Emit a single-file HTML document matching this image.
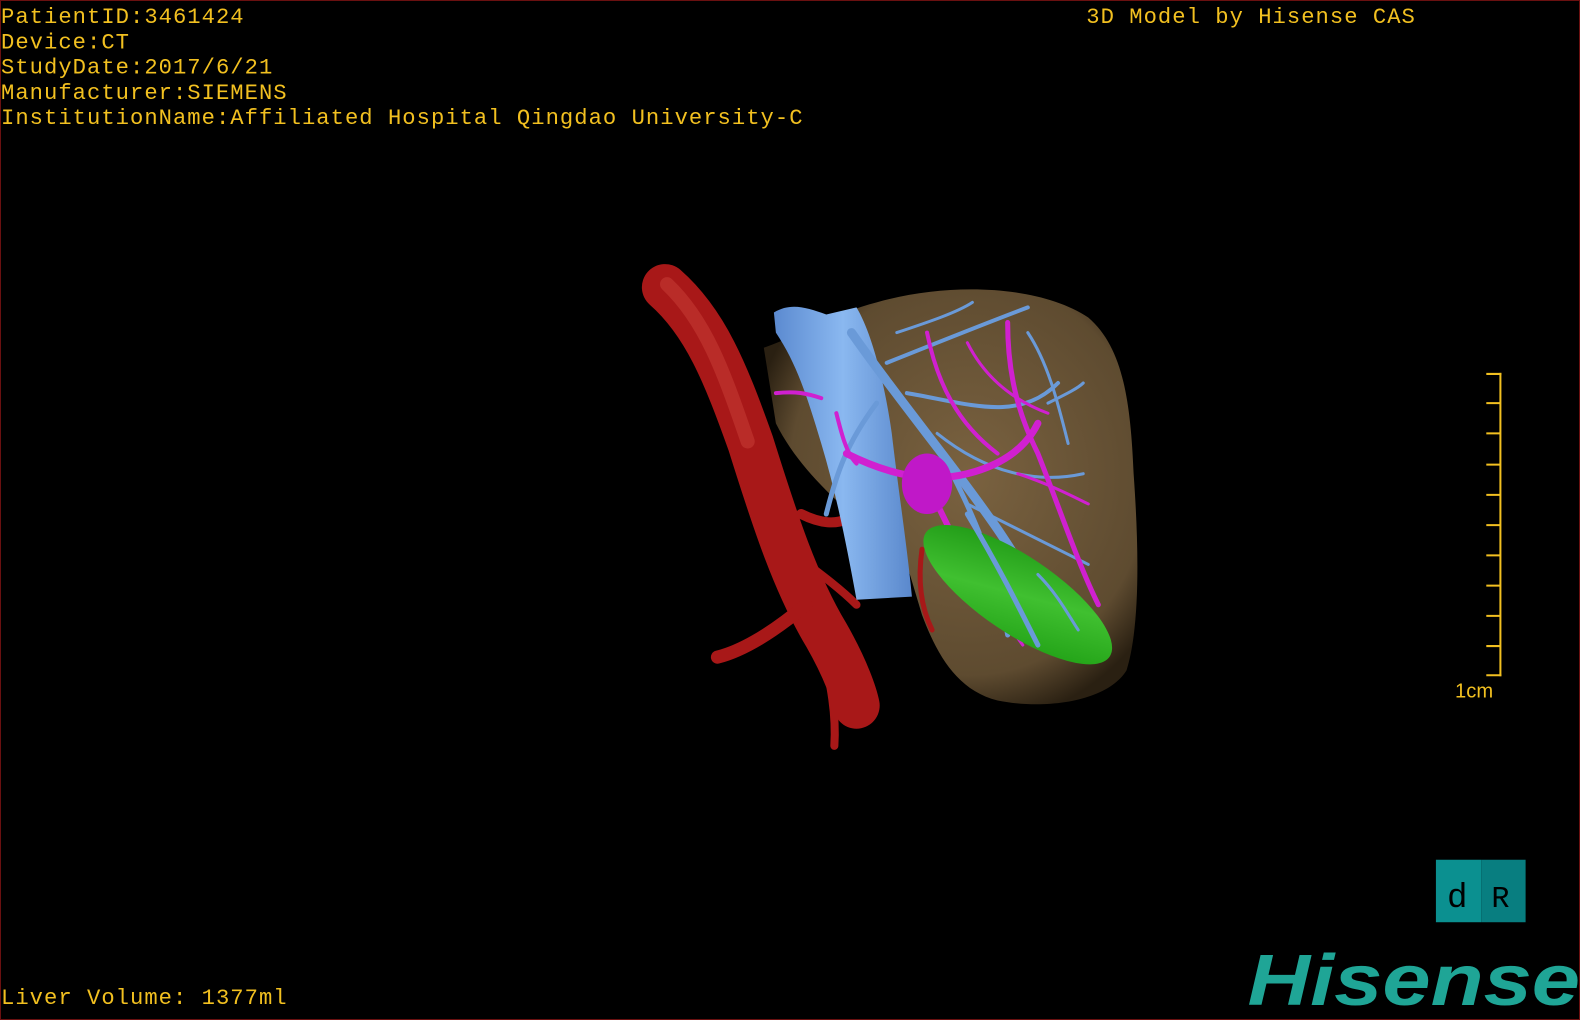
<!DOCTYPE html>
<html><head><meta charset="utf-8"><style>
html,body{margin:0;padding:0;background:#000;width:1580px;height:1020px;overflow:hidden}
#w{position:absolute;left:0;top:0;width:1568px;height:1012px;transform:scale(1.00766,1.0079);transform-origin:0 0}
.frame{position:absolute;left:0;top:0;width:1580px;height:1020px;border:1px solid #6a1010;box-sizing:border-box}
.t{position:absolute;font-family:"Liberation Mono",monospace;font-size:22px;letter-spacing:1.02px;color:#f2c020;white-space:pre;line-height:25px}
</style></head><body>
<div class="frame"></div>
<div id="w">
<div class="t" style="left:1px;top:5px">PatientID:3461424
Device:CT
StudyDate:2017/6/21
Manufacturer:SIEMENS
InstitutionName:Affiliated Hospital Qingdao University-C</div>
<div class="t" style="left:1078px;top:5px">3D Model by Hisense CAS</div>
<div class="t" style="left:1px;top:978px">Liver Volume: 1377ml</div>
<svg width="1568" height="1012" style="position:absolute;left:0;top:0">
<defs>
<radialGradient id="lv" cx="0.55" cy="0.45" r="0.6"><stop offset="0" stop-color="#7a6240"/><stop offset="0.8" stop-color="#5e4b30"/><stop offset="1" stop-color="#2a2012"/></radialGradient>
<linearGradient id="ivc" x1="0" x2="1"><stop offset="0" stop-color="#5b8ad0"/><stop offset="0.5" stop-color="#8ab8f0"/><stop offset="1" stop-color="#5a88cc"/></linearGradient>
<linearGradient id="gb" x1="0" y1="0" x2="1" y2="1"><stop offset="0" stop-color="#189010"/><stop offset="0.5" stop-color="#40c030"/><stop offset="1" stop-color="#1a9a10"/></linearGradient>
</defs>
<path d="M758 345 C800 330 830 310 870 300 C940 280 1030 282 1080 315 C1115 345 1122 400 1125 470 C1130 540 1132 620 1118 665 C1100 695 1040 705 990 695 C950 685 930 650 915 610 L900 560 C860 520 800 480 770 420 Z" fill="url(#lv)"/>
<g stroke-linecap="round" fill="none">
<path d="M660 285 C700 320 720 370 745 440 C770 520 790 580 820 630 C840 665 848 690 850 700" stroke="#a81818" stroke-width="46"/>
<path d="M662 282 C700 318 718 368 742 438" stroke="#c43a34" stroke-width="14" opacity="0.6"/>
<path d="M800 600 C770 625 740 645 712 652" stroke="#a81818" stroke-width="13"/>
<path d="M815 640 C825 680 830 710 828 740" stroke="#a81818" stroke-width="8"/>
<path d="M795 510 C815 520 830 520 840 515" stroke="#a81818" stroke-width="10"/>
<path d="M795 555 C815 570 835 585 850 600" stroke="#a81818" stroke-width="8"/>
<path d="M915 545 C910 580 915 605 925 625" stroke="#a81818" stroke-width="5"/>
</g>
<path d="M768 310 C785 300 800 305 820 312 L850 305 C865 330 878 380 885 430 C892 490 900 540 905 592 L850 595 C840 540 830 490 815 440 C800 390 790 360 770 330 Z" fill="url(#ivc)"/>
<g stroke="#6a9ad8" stroke-linecap="round" fill="none">
<path d="M845 330 C880 380 920 430 950 470 C980 510 1010 550 1040 610" stroke-width="9"/>
<path d="M940 460 C960 500 990 560 1000 630" stroke-width="5"/>
<path d="M880 360 C930 340 980 320 1020 305" stroke-width="4"/>
<path d="M900 390 C960 400 1010 420 1050 380" stroke-width="4"/>
<path d="M870 400 C840 440 830 470 820 510" stroke-width="5"/>
<path d="M930 430 C980 470 1030 480 1075 470" stroke-width="3"/>
<path d="M960 500 C1000 520 1040 540 1080 560" stroke-width="3"/>
<path d="M1020 330 C1040 360 1050 400 1060 440" stroke-width="3"/>
<path d="M1000 550 C1020 580 1040 610 1050 620" stroke-width="3"/>
<path d="M890 330 C920 320 950 310 965 300" stroke-width="3"/>
<path d="M1040 400 C1060 390 1070 385 1075 380" stroke-width="3"/>
</g>
<g stroke="#d020d0" stroke-linecap="round" fill="none">
<path d="M840 450 C880 470 920 480 960 470 C1000 460 1020 440 1030 420" stroke-width="7"/>
<path d="M920 480 C940 520 960 560 970 590" stroke-width="6"/>
<path d="M1000 320 C1000 370 1010 410 1030 450 C1050 500 1070 560 1090 600" stroke-width="5"/>
<path d="M920 330 C930 380 950 420 990 450" stroke-width="4"/>
<path d="M960 340 C975 370 1000 395 1040 410" stroke-width="3"/>
<path d="M830 410 C835 430 840 450 850 460" stroke-width="4"/>
<path d="M1010 470 C1040 480 1060 490 1080 500" stroke-width="3"/>
<path d="M970 560 C990 600 1000 620 1015 640" stroke-width="3"/>
<path d="M770 390 C790 388 800 390 815 395" stroke-width="4"/>
</g>
<ellipse cx="920" cy="480" rx="25" ry="30" fill="#c018c8"/>
<ellipse cx="1010" cy="590" rx="110" ry="38" transform="rotate(34 1010 590)" fill="url(#gb)"/>
<g stroke="#6a9ad8" stroke-linecap="round" fill="none">
<path d="M960 510 C990 560 1010 600 1030 640" stroke-width="5"/>
<path d="M1030 570 C1050 590 1060 610 1070 625" stroke-width="3"/>
</g>
<g stroke="#f2c020" stroke-width="2" fill="none">
<path d="M1489 370 V671"/>
<path d="M1475 371 H1490 M1475 400 H1489 M1475 430 H1489 M1475 461 H1489 M1475 491 H1489 M1475 521 H1489 M1475 551 H1489 M1475 581 H1489 M1475 611 H1489 M1475 641 H1489 M1475 670 H1490"/>
</g>
<text x="1444" y="692" font-family="Liberation Sans,sans-serif" font-size="20" fill="#f2c020">1cm</text>
<rect x="1425" y="853" width="45" height="62" fill="#0b9090"/>
<rect x="1470" y="853" width="44" height="62" fill="#087e80"/>
<text x="1436" y="900" font-family="Liberation Mono,monospace" font-size="34" fill="#000">d</text>
<text x="1480" y="900" font-family="Liberation Mono,monospace" font-size="30" fill="#000">R</text>
<text x="1238" y="997" font-family="Liberation Sans,sans-serif" font-weight="bold" font-style="italic" font-size="72" fill="#1fa596" textLength="330" lengthAdjust="spacingAndGlyphs">Hisense</text>
</svg>
</div>
</body></html>
